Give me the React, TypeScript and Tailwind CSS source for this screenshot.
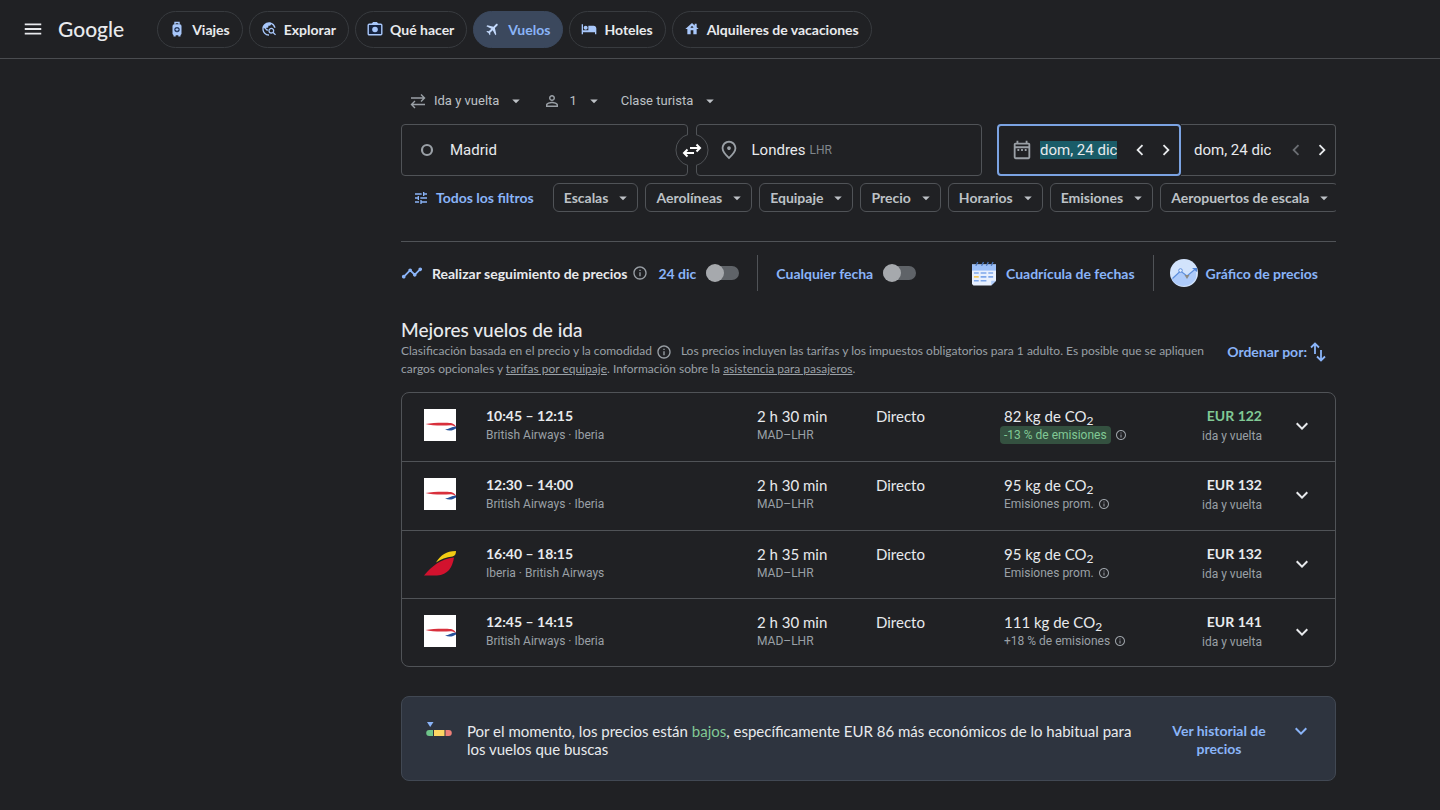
import React from 'react';
import {
  MdArrowDropDown,
  MdChevronLeft,
  MdChevronRight,
  MdFlight,
  MdHotel,
  MdHouse,
  MdInfoOutline,
  MdKeyboardArrowDown,
  MdMenu,
  MdOutlineDateRange,
  MdOutlinePlace,
  MdPersonOutline,
  MdTimeline,
  MdTravelExplore,
  MdTune,
} from 'react-icons/md';

interface Flight {
  airline: 'ba' | 'iberia';
  times: string;
  carriers: string;
  duration: string;
  co2: string;
  emissions: string;
  price: string;
  best?: boolean;
}

const flights: Flight[] = [
  { airline: 'ba', times: '10:45 – 12:15', carriers: 'British Airways · Iberia', duration: '2 h 30 min', co2: '82', emissions: '-13 % de emisiones', price: 'EUR 122', best: true },
  { airline: 'ba', times: '12:30 – 14:00', carriers: 'British Airways · Iberia', duration: '2 h 30 min', co2: '95', emissions: 'Emisiones prom.', price: 'EUR 132' },
  { airline: 'iberia', times: '16:40 – 18:15', carriers: 'Iberia · British Airways', duration: '2 h 35 min', co2: '95', emissions: 'Emisiones prom.', price: 'EUR 132' },
  { airline: 'ba', times: '12:45 – 14:15', carriers: 'British Airways · Iberia', duration: '2 h 30 min', co2: '111', emissions: '+18 % de emisiones', price: 'EUR 141' },
];

const filters = ['Escalas', 'Aerolíneas', 'Equipaje', 'Precio', 'Horarios', 'Emisiones', 'Aeropuertos de escala'];

function SuitcaseIcon() {
  return (
    <svg width="16" height="16" viewBox="0 0 16 16" fill="none">
      <path d="M6 3.500V1.500h4v2" stroke="#a8c7fa" strokeWidth="1.400" />
      <rect x="3.500" y="3.200" width="9" height="11" rx="1.800" fill="#a8c7fa" />
      <path d="M4.500 14h2.200v1.500H4.500zM9.300 14h2.200v1.500H9.300z" fill="#a8c7fa" />
      <circle cx="8" cy="8.600" r="2.700" fill="#24385c" />
      <path d="M8 6.600l.7 1.300 1.300.7-1.300.7L8 10.600l-.7-1.300-1.300-.7 1.300-.7z" fill="#a8c7fa" />
    </svg>
  );
}

function CameraIcon() {
  return (
    <svg width="16" height="16" viewBox="0 0 16 16" fill="none">
      <path d="M5 3l1-1.500h4L11 3" fill="#a8c7fa" stroke="#a8c7fa" />
      <rect x="1.200" y="3.200" width="13.600" height="10.600" rx="1" fill="#15233f" stroke="#a8c7fa" strokeWidth="1.400" />
      <circle cx="8" cy="8.500" r="2.800" fill="#a8c7fa" />
    </svg>
  );
}

const navItems = [
  { label: 'Viajes', icon: <SuitcaseIcon /> },
  { label: 'Explorar', icon: <MdTravelExplore size={16} color="#a8c7fa" /> },
  { label: 'Qué hacer', icon: <CameraIcon /> },
  { label: 'Vuelos', icon: <MdFlight size={16} color="#c3d9fb" className="rotate-45" />, active: true },
  { label: 'Hoteles', icon: <MdHotel size={16} color="#a8c7fa" /> },
  { label: 'Alquileres de vacaciones', icon: <MdHouse size={16} color="#a8c7fa" /> },
];

function AirlineLogo({ airline }: { airline: Flight['airline'] }) {
  if (airline === 'iberia') {
    return (
      <svg width="32" height="32" viewBox="0 0 32 32" role="img" aria-label="Iberia">
        <path d="M0 28.500C8 19 17 11.500 30 10.500 28.500 20 24 28 13 28.500z" fill="#d2122e" />
        <path d="M12 15.500C17 8 22 4 32 4c0 3-1 5-3.500 5.500C22 10 17 12 12 15.500z" fill="#f2cb13" />
      </svg>
    );
  }
  return (
    <svg width="32" height="32" viewBox="0 0 32 32" role="img" aria-label="British Airways">
      <path d="M0 0h32v32H0z" fill="#fff" />
      <path d="M1.500 15C9 13.400 22 13.400 27 14c3 .6 4.700 2.200 5 5-1.200-1.800-2.600-2.700-5-2.700C18 16.800 8 16.800 1.500 15z" fill="#d8303c" />
      <path d="M21 20.500c4-.4 6-2.900 11-3.100v2c-3 2-6.500 2.800-11 1.100z" fill="#24509a" />
    </svg>
  );
}

function Select({ label, value }: { label: string; value: string }) {
  return (
    <div className="relative flex items-center">
      <select
        aria-label={label}
        defaultValue={value}
        className="appearance-none field-sizing-content bg-transparent pr-[26px] text-[13px] leading-5 text-[#bdc1c6] outline-none"
      >
        <option>{value}</option>
      </select>
      <MdArrowDropDown size={18} className="pointer-events-none absolute right-0 text-[#bdc1c6]" />
    </div>
  );
}

function Toggle({ label }: { label: string }) {
  return (
    <label className="flex items-center gap-[10px] font-bold text-[#8ab4f8]">
      {label}
      <input
        type="checkbox"
        role="switch"
        className="relative h-[14px] w-[33px] appearance-none rounded-full bg-[#5f6368] before:absolute before:-top-[2px] before:left-0 before:size-[18px] before:rounded-full before:bg-[#a6a9ad]"
      />
    </label>
  );
}

function DateField({ label, focused }: { label: string; focused?: boolean }) {
  return (
    <div
      className={
        focused
          ? 'flex w-[184px] items-center rounded border-2 border-[#7ba3e2] pl-3'
          : 'flex flex-1 items-center rounded-r border border-l-0 border-[#505357] pl-[13px]'
      }
    >
      {focused && <MdOutlineDateRange size={22} className="mr-[7px] text-[#9aa0a6]" />}
      <input
        aria-label={label}
        defaultValue="dom, 24 dic"
        className={`field-sizing-content text-[15px] leading-[18px] text-[#e8eaed] outline-none ${focused ? 'bg-[#1a5c68]' : ''}`}
      />
      <button aria-label="Día anterior" className={`ml-auto flex w-[26px] justify-center ${focused ? '' : 'text-[#6b6e73]'}`}>
        <MdChevronLeft size={22} />
      </button>
      <button aria-label="Día siguiente" className="flex w-[26px] justify-center">
        <MdChevronRight size={22} />
      </button>
    </div>
  );
}

function FlightRow({ flight }: { flight: Flight }) {
  return (
    <li className="flex items-start border-[#505357] pt-[13px] pr-[21px] pl-[22px] not-first:border-t">
      <div className="mt-[3px]">
        <AirlineLogo airline={flight.airline} />
      </div>
      <div className="ml-[30px] flex-1">
        <div className="text-[14px] leading-5 font-bold">{flight.times}</div>
        <div className="font-[Roboto] text-xs leading-[18px] text-[#9aa0a6]">{flight.carriers}</div>
      </div>
      <div className="w-[119px]">
        <div className="leading-5">{flight.duration}</div>
        <div className="font-[Roboto] text-xs leading-[18px] text-[#9aa0a6]">MAD–LHR</div>
      </div>
      <div className="w-32 leading-5">Directo</div>
      <div className="w-40">
        <div className="leading-5">
          {flight.co2} kg de CO<sub className="-bottom-[3px] text-xs">2</sub>
        </div>
        <div className="flex items-center gap-1 font-[Roboto] text-xs leading-[18px] text-[#9aa0a6]">
          {flight.best ? (
            <span className="-ml-1 rounded-sm bg-[#345140] px-1 text-[#81c995]">{flight.emissions}</span>
          ) : (
            <span>{flight.emissions}</span>
          )}
          <MdInfoOutline size={12} />
        </div>
      </div>
      <div className="w-[98px] text-right">
        <div className={`text-[14px] leading-5 font-bold ${flight.best ? 'text-[#81c995]' : ''}`}>{flight.price}</div>
        <div className="font-[Roboto] text-xs leading-5 text-[#9aa0a6]">ida y vuelta</div>
      </div>
      <button aria-label="Ver detalles del vuelo" className="mt-[8px] ml-[28px]">
        <MdKeyboardArrowDown size={24} />
      </button>
    </li>
  );
}

export default function App() {
  return (
    <div className="min-h-screen bg-[#202124] font-[Lato,sans-serif] text-[15px] text-[#e8eaed]">
      <header className="flex h-[59px] items-center border-b border-[#4a4c50] pl-[22px]">
        <button aria-label="Menú principal">
          <MdMenu size={22} />
        </button>
        <a href="#" className="ml-[14px] text-[21px] leading-7 font-medium">
          Google
        </a>
        <nav className="ml-[33px] flex gap-[6px] whitespace-nowrap">
          {navItems.map((item) => (
            <a
              key={item.label}
              href="#"
              className={`flex h-[37px] items-center gap-[7px] rounded-full border pr-3 pl-[11px] text-[14px] font-bold ${
                item.active ? 'border-[#3b485d] bg-[#3b485d] text-[#8ab4f8]' : 'border-[#383b3f]'
              }`}
            >
              {item.icon}
              {item.label}
            </a>
          ))}
        </nav>
      </header>

      <main className="pr-[104px] pl-[401px]">
        <div className="mt-8 flex items-center font-[Roboto] text-[#9aa0a6]">
          <svg width="16" height="16" viewBox="0 0 16 16" fill="none" stroke="currentColor" strokeWidth="1.400" className="ml-[9px]">
            <path d="M1 5h13.500M11 1.500L14.500 5 11 8.500M15 11.500H1.500M5 8l-3.500 3.500L5 15" />
          </svg>
          <div className="ml-2">
            <Select label="Tipo de billete" value="Ida y vuelta" />
          </div>
          <MdPersonOutline size={18} className="mr-2 ml-[18px]" />
          <Select label="Pasajeros" value="1" />
          <div className="ml-[18px]">
            <Select label="Clase" value="Clase turista" />
          </div>
        </div>

        <div className="mt-[13px] flex h-[52px] gap-[15px] font-[Roboto]">
          <div className="relative grid flex-1 grid-cols-2 gap-2">
            <div className="flex items-center rounded border border-[#505357] pl-[18px]">
              <svg width="14" height="14" viewBox="0 0 14 14" className="mr-4 shrink-0">
                <circle cx="7" cy="7" r="5" fill="none" stroke="#9aa0a6" strokeWidth="2.200" />
              </svg>
              <input aria-label="Origen" defaultValue="Madrid" className="w-full text-[15px] outline-none" />
            </div>
            <div className="flex items-center rounded border border-[#505357] pl-[21px]">
              <MdOutlinePlace size={22} className="mr-3 shrink-0 text-[#9aa0a6]" />
              <input aria-label="Destino" defaultValue="Londres" className="field-sizing-content text-[15px] outline-none" />
              <span className="ml-1 text-xs text-[#80868b]">LHR</span>
            </div>
            <button aria-label="Intercambiar origen y destino" className="absolute top-1/2 left-1/2 -translate-1/2">
              <svg width="34" height="34" viewBox="0 0 34 34" fill="none">
                <circle cx="17" cy="17" r="16" fill="#202124" />
                <path d="M13 1.500a16 16 0 0 0 0 31M21 1.500a16 16 0 0 1 0 31" stroke="#505357" />
                <path d="M15 15h10M21.500 11.500L25 15l-3.500 3.500M19 20H9M12.500 16.500L9 20l3.500 3.500" stroke="#fff" strokeWidth="2" />
              </svg>
            </button>
          </div>
          <div className="flex w-[339px]">
            <DateField label="Salida" focused />
            <DateField label="Vuelta" />
          </div>
        </div>

        <div className="mt-[7px] flex gap-[7px] overflow-hidden text-[14px] font-bold whitespace-nowrap text-[#bdc1c6]">
          <button className="mr-3 ml-3 flex shrink-0 items-center gap-[7px] text-[#8ab4f8]">
            <MdTune size={16} />
            Todos los filtros
          </button>
          {filters.map((filter) => (
            <button
              key={filter}
              aria-haspopup="dialog"
              className="flex h-[29px] shrink-0 items-center gap-[6px] rounded-md border border-[#505357] pr-[5px] pl-[10px]"
            >
              {filter}
              <MdArrowDropDown size={18} />
            </button>
          ))}
        </div>

        <hr className="mt-[29px] border-[#505357]" />

        <div className="mt-[13px] flex h-9 items-center text-[14px] font-bold whitespace-nowrap">
          <MdTimeline size={22} color="#8ab4f8" className="mr-[9px]" />
          Realizar seguimiento de precios
          <MdInfoOutline size={16} className="mr-[10px] ml-[5px] text-[#9aa0a6]" />
          <Toggle label="24 dic" />
          <div className="mx-[18px] h-full w-px bg-[#505357]" />
          <Toggle label="Cualquier fecha" />
          <button className="ml-auto flex items-center gap-[10px] text-[#8ab4f8]">
            <svg width="24" height="25" viewBox="0 0 25 26" fill="none">
              <path d="M0 3.500h25v17l-5 5H1.500L0 24z" fill="#e8f0fe" />
              <path d="M0 3.500h25V10H0z" fill="#9dc0f8" />
              <path d="M4 5l2-4M10 5l2-4M15 5l2-4M20 5l2-4" stroke="#4a76bd" strokeWidth="1.400" />
              <path d="M9 12.500h6M17 12.500h5M9 16.500h6M17 16.500h5M2 20.500h5M9 20.500h6M2 12.500h5" stroke="#7da6ea" strokeWidth="1.600" />
              <path d="M2 16.500h5" stroke="#f3c34c" strokeWidth="1.600" />
              <path d="M20 25.500v-5h5z" fill="#aecbfa" />
            </svg>
            Cuadrícula de fechas
          </button>
          <div className="mr-4 ml-[18px] h-full w-px bg-[#505357]" />
          <button className="mr-[18px] flex items-center gap-2 text-[#8ab4f8]">
            <svg width="28" height="28" viewBox="0 0 28 28" fill="none">
              <circle cx="14" cy="14" r="14" fill="#d2e3fc" />
              <path d="M2 20l8-8 7 5.500 9-7.500v9A14 14 0 0 1 2 21z" fill="#aecbfa" />
              <path d="M2.500 19.500L10.500 12l6.500 5 9-7.500" stroke="#5e8fdc" strokeWidth="1.200" />
              <circle cx="10.500" cy="11.500" r="1.800" fill="#e8f0fe" stroke="#5e8fdc" />
              <path d="M22 9h5v4z" fill="#4f84d8" />
              <path d="M14.500 16h5L17 20z" fill="#8c8a84" />
            </svg>
            Gráfico de precios
          </button>
        </div>

        <div className="mt-[27px] flex items-end justify-between">
          <div className="flex-1">
            <h1 className="text-[19px] leading-6 font-medium">Mejores vuelos de ida</h1>
            <p className="text-xs leading-[18px] text-[#9aa0a6]">
              Clasificación basada en el precio y la comodidad
              <MdInfoOutline size={16} className="mr-[9px] ml-[4px] inline-block align-middle" />
              Los precios incluyen las tarifas y los impuestos obligatorios para 1 adulto. Es posible que se apliquen
              cargos opcionales y{' '}
              <a href="#" className="underline">
                tarifas por equipaje
              </a>
              . Información sobre la{' '}
              <a href="#" className="underline">
                asistencia para pasajeros
              </a>
              .
            </p>
          </div>
          <button className="mr-[10px] mb-4 ml-2 flex items-center gap-[3px] text-[14px] leading-5 font-bold text-[#8ab4f8]">
            Ordenar por:
            <svg width="16" height="20" viewBox="0 0 16 20" fill="none" stroke="currentColor" strokeWidth="1.800">
              <path d="M5 12V2M1 5.500L5 1.500l4 4M11 8v10M7 14.500l4 4 4-4" />
            </svg>
          </button>
        </div>

        <ul className="mt-[14px] grid min-h-[275px] auto-rows-fr rounded-lg border border-[#505357]">
          {flights.map((flight) => (
            <FlightRow key={flight.times} flight={flight} />
          ))}
        </ul>

        <section className="mt-[29px] flex min-h-[85px] items-start rounded-lg border border-[#414853] bg-[#2e343f] pt-[25px] pr-[22px] pl-6 leading-[18px]">
          <svg width="26" height="15" viewBox="0 0 26 15" className="mr-[15px] shrink-0">
            <path d="M1 0h6.500L4.200 5z" fill="#8ab4f8" />
            <path d="M3.200 8H7v6H3.200a3 3 0 0 1 0-6z" fill="#6fc58a" />
            <path d="M8 8h10.500v6H8z" fill="#fdd663" />
            <path d="M19.500 8h3.300a3 3 0 0 1 0 6h-3.300z" fill="#ee8078" />
          </svg>
          <p className="flex-1">
            Por el momento, los precios están <span className="text-[#81c995]">bajos</span>, específicamente EUR 86 más
            económicos de lo habitual para los vuelos que buscas
          </p>
          <button className="mr-3 ml-2 w-[116px] px-2 text-[14px] font-bold text-[#8ab4f8]">Ver historial de precios</button>
          <button aria-label="Mostrar historial" className="-mt-[3px] text-[#8ab4f8]">
            <MdKeyboardArrowDown size={24} />
          </button>
        </section>
      </main>
    </div>
  );
}
